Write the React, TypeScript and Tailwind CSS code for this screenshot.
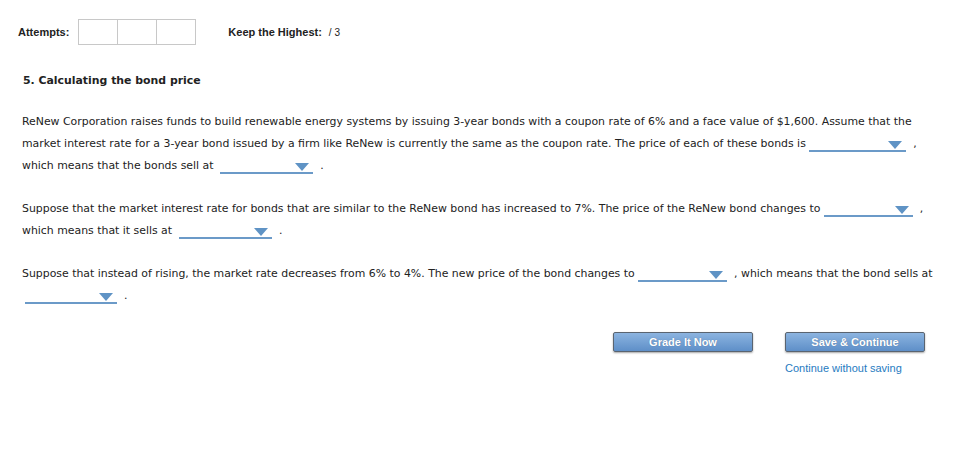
import React from "react";

function Drop({ w }: { w: string }) {
  return (
    <span className={`relative inline-block align-[-5px] h-[14px] ${w} border-b-2 border-[#6b9ac8]`}>
      <span className="absolute right-[4px] top-[3px] w-0 h-0 border-l-[7px] border-r-[7px] border-t-[8px] border-l-transparent border-r-transparent border-t-[#5f93c5]" />
    </span>
  );
}

export default function App() {
  const body = "font-['DejaVu_Sans',Verdana,sans-serif] text-[10.9px] leading-[22px] text-[#222]";
  return (
    <div className="w-[957px] h-[459px] bg-white relative">
      <div className="flex items-center pt-[19px] pl-[18px] font-['Liberation_Sans',Arial,sans-serif] text-[11px] text-[#222]">
        <span className="font-bold">Attempts:</span>
        <div className="flex ml-[9px]">
          <div className="w-[40px] h-[26px] border border-[#c8c8c8]" />
          <div className="w-[40px] h-[26px] border border-[#c8c8c8] -ml-px" />
          <div className="w-[40px] h-[26px] border border-[#c8c8c8] -ml-px" />
        </div>
        <span className="font-bold ml-[32px]">Keep the Highest:</span>
        <span className="ml-[7px] text-[10px]">/ 3</span>
      </div>

      <div className={`${body} pl-[22px]`}>
        <div className="font-bold mt-[25px] ml-[1px]">5. Calculating the bond price</div>

        <div className="mt-[19px] whitespace-nowrap">
          ReNew Corporation raises funds to build renewable energy systems by issuing 3-year bonds with a coupon rate of 6% and a face value of $1,600. Assume that the
          <br />
          market interest rate for a 3-year bond issued by a firm like ReNew is currently the same as the coupon rate. The price of each of these bonds is <Drop w="w-[97px]" /> &nbsp;,
          <br />
          which means that the bonds sell at &nbsp;<Drop w="w-[93px]" /> &nbsp;.
        </div>

        <div className="mt-[21px] whitespace-nowrap">
          Suppose that the market interest rate for bonds that are similar to the ReNew bond has increased to 7%. The price of the ReNew bond changes to <Drop w="w-[89px]" /> &nbsp;,
          <br />
          which means that it sells at &nbsp;<Drop w="w-[93px]" /> &nbsp;.
        </div>

        <div className="mt-[21px] whitespace-nowrap">
          Suppose that instead of rising, the market rate decreases from 6% to 4%. The new price of the bond changes to <Drop w="w-[89px]" /> &nbsp;, which means that the bond sells at
          <br />
          <span className="ml-[3px]" /><Drop w="w-[92px]" /> &nbsp;.
        </div>
      </div>

      <div className="flex pl-[613px] mt-[25px] font-['Liberation_Sans',Arial,sans-serif] text-[11px]">
        <button className="w-[140px] h-[20px] rounded-[2px] border border-[#5a6470] bg-gradient-to-b from-[#8cb4e0] to-[#5e8fc8] text-white font-bold shadow-[0_1px_2px_rgba(0,0,0,0.35)] [text-shadow:0_0_1px_rgba(0,0,0,0.3)]">
          Grade It Now
        </button>
        <div className="ml-[32px] flex flex-col">
          <button className="w-[140px] h-[20px] rounded-[2px] border border-[#5a6470] bg-gradient-to-b from-[#8cb4e0] to-[#5e8fc8] text-white font-bold shadow-[0_1px_2px_rgba(0,0,0,0.35)] [text-shadow:0_0_1px_rgba(0,0,0,0.3)]">
            Save &amp; Continue
          </button>
          <span className="mt-[8px] text-[#1f7bbf]">Continue without saving</span>
        </div>
      </div>
    </div>
  );
}
